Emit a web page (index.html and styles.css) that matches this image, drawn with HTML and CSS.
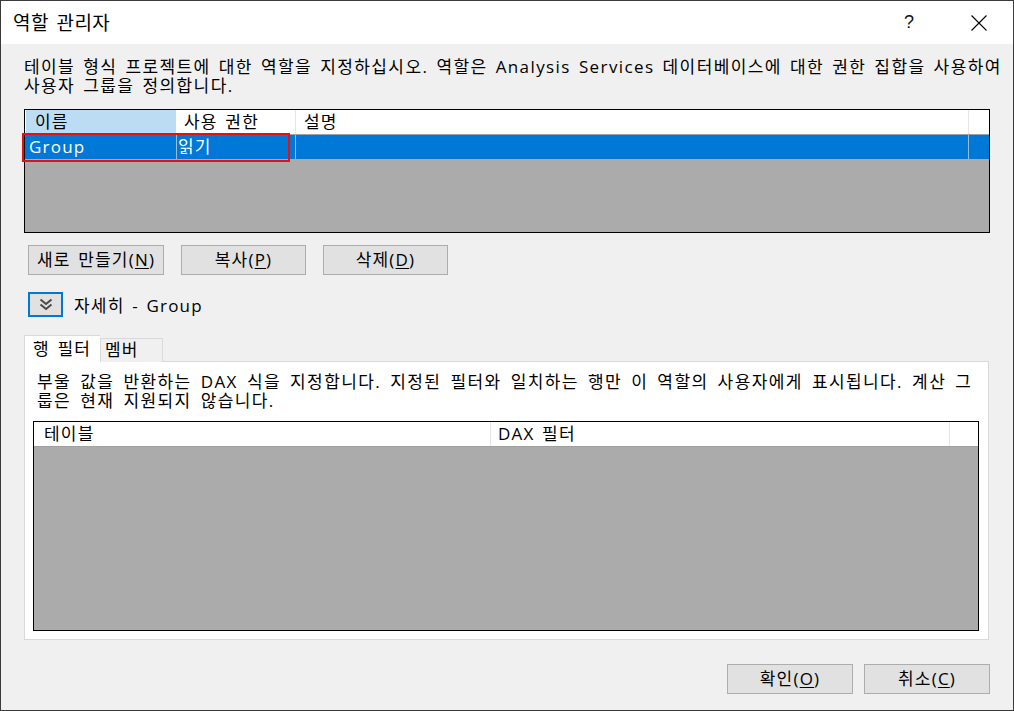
FILE: index.html
```html
<!DOCTYPE html>
<html lang="ko">
<head>
<meta charset="utf-8">
<title>역할 관리자</title>
<link rel="stylesheet" href="styles.css">
</head>
<body>
<div class="window">
  <div class="titlebar">
    <div class="title">역할 관리자</div>
    <div class="tb-buttons">
      <span class="tb-help">?</span>
      <svg class="tb-close" width="16" height="16" viewBox="0 0 16 16"><path d="M0.5 0.5 L15.5 15.5 M15.5 0.5 L0.5 15.5" stroke="#000" stroke-width="1.1" fill="none"/></svg>
    </div>
  </div>
  <div class="content">
    <p class="desc">테이블 형식 프로젝트에 대한 역할을 지정하십시오. 역할은 Analysis Services 데이터베이스에 대한 권한 집합을 사용하여<br>사용자 그룹을 정의합니다.</p>

    <div class="grid roles">
      <div class="ghead">
        <div class="gc c1 sorted">이름</div>
        <div class="gc c2">사용 권한</div>
        <div class="gc c3">설명</div>
        <div class="gc c4"></div>
      </div>
      <div class="grow selected">
        <div class="gc c1">Group</div>
        <div class="gc c2">읽기</div>
        <div class="gc c3"></div>
        <div class="gc c4"></div>
      </div>
      <div class="highlight"></div>
    </div>

    <div class="btnrow">
      <button class="btn b-new">새로 만들기(<u>N</u>)</button>
      <button class="btn b-std">복사(<u>P</u>)</button>
      <button class="btn b-std">삭제(<u>D</u>)</button>
    </div>

    <div class="details">
      <span class="expander">
        <svg width="14" height="13" viewBox="0 0 14 13"><path d="M1.5 1.5 L7 6 L12.5 1.5 M1.5 6.5 L7 11 L12.5 6.5" stroke="#4a4a4a" stroke-width="2" fill="none"/></svg>
      </span>
      <span class="details-label">자세히 - Group</span>
    </div>

    <div class="tabs">
      <div class="tab active">행 필터</div>
      <div class="tab">멤버</div>
    </div>
    <div class="panel">
      <p class="panel-text">부울 값을 반환하는 DAX 식을 지정합니다. 지정된 필터와 일치하는 행만 이 역할의 사용자에게 표시됩니다. 계산 그<br>룹은 현재 지원되지 않습니다.</p>
      <div class="grid filters">
        <div class="ghead">
          <div class="gc f1">테이블</div>
          <div class="gc f2">DAX 필터</div>
          <div class="gc f3"></div>
        </div>
      </div>
    </div>

    <div class="footer">
      <button class="btn b-foot">확인(<u>O</u>)</button>
      <button class="btn b-foot">취소(<u>C</u>)</button>
    </div>
  </div>
</div>
</body>
</html>
```
FILE: styles.css
```css
* { box-sizing: border-box; }
html, body { margin: 0; padding: 0; }
body {
  width: 1014px;
  height: 711px;
  overflow: hidden;
  font-family: "Open Sans", "Noto Sans CJK KR", sans-serif;
  font-size: 17px;
  letter-spacing: 1.2px;
  word-spacing: 2px;
  color: #000;
  background: #2b2b2b;
}
.window {
  width: 1014px;
  height: 711px;
  border: 1px solid #3a3a3a;
  background: #f0f0f0;
  display: flex;
  flex-direction: column;
}
.titlebar {
  height: 43px;
  background: #fff;
  display: flex;
  align-items: center;
  justify-content: space-between;
  flex: none;
}
.title {
  padding-left: 12px;
  font-size: 19px;
  letter-spacing: 0.5px;
  line-height: 22px;
  margin-top: 1px;
}
.tb-buttons {
  display: flex;
  align-items: center;
  padding-right: 26px;
}
.tb-help {
  font-family: "Liberation Sans", sans-serif;
  font-size: 18px;
  font-weight: 300;
  letter-spacing: 0;
  color: #111;
  margin-right: 57px;
}
.tb-close { display: block; margin-top: 1px; }

.content {
  padding: 0 23px 0 23px;
  flex: 1;
}
.desc {
  margin: 13px 0 0 0;
  line-height: 19px;
  white-space: nowrap;
  letter-spacing: 1.4px;
  word-spacing: 2.3px;
}

.grid {
  position: relative;
  border: 1px solid #000;
  background: #ababab;
}
.roles {
  margin-top: 14px;
  width: 966px;
  height: 124px;
}
.ghead, .grow {
  display: flex;
  height: 25px;
}
.ghead {
  background: #fff;
  border-bottom: 1px solid #a0a0a0;
}
.grow { height: 24px; }
.gc {
  line-height: 24px;
  white-space: nowrap;
  overflow: hidden;
  border-right: 1px solid #e5e5e5;
  flex: none;
}
.c1 { width: 152px; padding-left: 9px; }
.c2 { width: 119px; padding-left: 7px; }
.c3 { width: 673px; padding-left: 8px; }
.c4 { flex: 1; border-right: none; }
.ghead .sorted { background: #bcdcf4; border-right: 1px solid #fff; border-left: 1px solid #fff; }
.selected { background: #0078d7; color: #fff; }
.selected .gc { border-right-color: #9bbcd6; }
.selected .c1 { padding-left: 4px; }
.selected .c2 { padding-left: 1px; }
.highlight {
  position: absolute;
  left: -3px;
  top: 23px;
  width: 268px;
  height: 29px;
  border: 2px solid #e8100e;
}

.btnrow {
  display: flex;
  gap: 17px;
  margin: 12px 0 0 4px;
}
.btn {
  font-family: "Open Sans", "Noto Sans CJK KR", sans-serif;
  font-size: 17px;
  letter-spacing: 1.2px;
  word-spacing: 2px;
  height: 30px;
  background: #e1e1e1;
  border: 1px solid #adadad;
  padding: 0;
  color: #000;
  line-height: 26px;
}
.btn u { text-underline-offset: 2px; }
.b-new { width: 136px; }
.b-std { width: 125px; }
.b-foot { width: 126px; }

.details {
  display: flex;
  align-items: center;
  margin: 17px 0 0 4px;
  height: 25px;
}
.expander {
  width: 35px;
  height: 25px;
  border: 2px solid #0078d7;
  background: #e1e1e1;
  display: flex;
  align-items: center;
  justify-content: center;
}
.expander svg { display: block; }
.details-label { margin-left: 11px; }

.tabs {
  display: flex;
  align-items: flex-end;
  height: 26px;
  margin-top: 19px;
  position: relative;
  z-index: 1;
  margin-bottom: -1px;
}
.tab {
  height: 24px;
  padding: 0 0 0 4px;
  width: 63px;
  border: 1px solid #d9d9d9;
  border-bottom: none;
  line-height: 22px;
  background: #f0f0f0;
  white-space: nowrap;
}
.tab.active {
  width: 76px;
  height: 27px;
  background: #fff;
  padding-left: 8px;
  line-height: 25px;
  border-right: none;
}
.panel {
  width: 965px;
  height: 279px;
  background: #fff;
  border: 1px solid #d9d9d9;
  padding: 0 8px;
}
.panel-text {
  margin: 10px 0 0 4px;
  line-height: 19px;
  white-space: nowrap;
  letter-spacing: 1.4px;
  word-spacing: 3.3px;
}
.filters {
  margin-top: 11px;
  width: 946px;
  height: 210px;
}
.f1 { width: 457px; padding-left: 10px; }
.f2 { width: 459px; padding-left: 7px; }
.f3 { flex: 1; border-right: none; }

.footer {
  display: flex;
  justify-content: flex-end;
  gap: 11px;
  margin-top: 24px;
}
```
